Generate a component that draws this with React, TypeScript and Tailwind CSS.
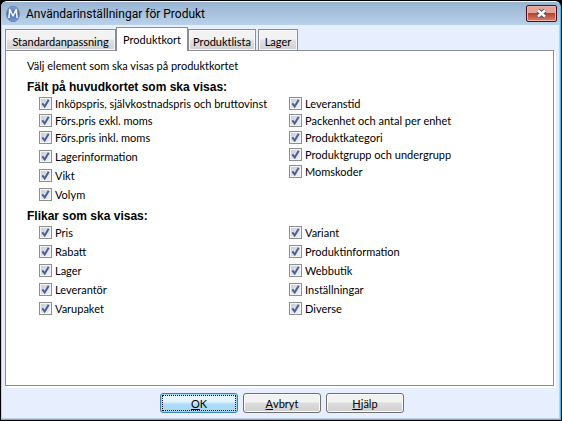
import { useState } from "react";

type Field = {
  id: string;
  label: string;
  spaced?: boolean;
};

const tabs = [
  { label: "Standardanpassning", size: "w-[111px]" },
  { label: "Produktkort", size: "w-[72px]" },
  { label: "Produktlista", size: "mr-[2px] w-[68px]" },
  { label: "Lager", size: "w-[40px]" },
];

const cardLeft: Field[] = [
  { id: "inkopspris", label: "Inköpspris, självkostnadspris och bruttovinst" },
  { id: "exkl", label: "Förs.pris exkl. moms" },
  { id: "inkl", label: "Förs.pris inkl. moms" },
  { id: "lagerinfo", label: "Lagerinformation", spaced: true },
  { id: "vikt", label: "Vikt", spaced: true },
  { id: "volym", label: "Volym", spaced: true },
];

const cardRight: Field[] = [
  { id: "leveranstid", label: "Leveranstid" },
  { id: "packenhet", label: "Packenhet och antal per enhet" },
  { id: "kategori", label: "Produktkategori" },
  { id: "grupp", label: "Produktgrupp och undergrupp" },
  { id: "momskoder", label: "Momskoder" },
];

const tabsLeft: Field[] = [
  { id: "pris", label: "Pris" },
  { id: "rabatt", label: "Rabatt", spaced: true },
  { id: "lager", label: "Lager", spaced: true },
  { id: "leverantor", label: "Leverantör", spaced: true },
  { id: "varupaket", label: "Varupaket", spaced: true },
];

const tabsRight: Field[] = [
  { id: "variant", label: "Variant" },
  { id: "produktinfo", label: "Produktinformation", spaced: true },
  { id: "webbutik", label: "Webbutik", spaced: true },
  { id: "installningar", label: "Inställningar", spaced: true },
  { id: "diverse", label: "Diverse", spaced: true },
];

function Logo() {
  return (
    <svg width="16" height="18" viewBox="0 0 16 18" aria-hidden="true">
      <defs>
        <linearGradient id="logo" x1="0" y1="0" x2="0" y2="1">
          <stop offset="0" stopColor="#8fa9d3" />
          <stop offset="0.45" stopColor="#3f68b4" />
          <stop offset="1" stopColor="#7d9ccb" />
        </linearGradient>
      </defs>
      <ellipse cx="8" cy="9" rx="6.5" ry="7.7" fill="url(#logo)" stroke="#7187ab" />
      <path
        d="M3.9 13L4.8 4.5L8 11L11.2 4.5L12.1 13"
        fill="none"
        stroke="#f4f8ff"
        strokeWidth="1.6"
        strokeLinejoin="round"
      />
    </svg>
  );
}

function CheckField({ field }: { field: Field }) {
  return (
    <li className={`flex h-[17px] items-center ${field.spaced ? "mt-[2px]" : ""}`}>
      <span className="relative flex size-[13px] shrink-0">
        <input
          id={field.id}
          type="checkbox"
          defaultChecked
          className="peer size-[13px] appearance-none border border-[#8e8f8f] bg-linear-to-br from-[#c6cbd3] to-[#f6f6f6] shadow-[inset_0_0_0_1px_#f4f4f4]"
        />
        <svg
          viewBox="0 0 13 13"
          className="pointer-events-none absolute inset-0 hidden size-[13px] peer-checked:block"
          aria-hidden="true"
        >
          <path d="M3.3 6.3L5.7 9.5L9.7 2.7" fill="none" stroke="#4a5f97" strokeWidth="2" />
        </svg>
      </span>
      <label htmlFor={field.id} className="pl-[3px] whitespace-nowrap">
        {field.label}
      </label>
    </li>
  );
}

function FieldColumns({ left, right }: { left: Field[]; right: Field[] }) {
  return (
    <div className="grid grid-cols-2 pr-[14px] pl-[33px]">
      {[left, right].map((fields, i) => (
        <ul key={i}>
          {fields.map((field) => (
            <CheckField key={field.id} field={field} />
          ))}
        </ul>
      ))}
    </div>
  );
}

function DialogButton({ label, primary }: { label: string; primary?: boolean }) {
  return (
    <button
      type="button"
      className={`h-5 w-[78px] rounded-[3px] border p-px ${
        primary
          ? "border-[#3c7fb1] bg-linear-to-b from-[#e5f4fc] from-40% to-[#a9dbf5] to-60% shadow-[inset_0_0_0_1px_#9bdcf5]"
          : "border-[#707070] bg-linear-to-b from-[#f2f2f2] from-45% via-[#dddddd] via-50% to-[#cfcfcf] shadow-[inset_0_0_0_1px_#fafafa]"
      }`}
    >
      <span
        className={`flex h-4 items-center justify-center border ${
          primary ? "border-dotted border-black" : "border-transparent"
        }`}
      >
        <span className="underline">{label[0]}</span>
        {label.slice(1)}
      </span>
    </button>
  );
}

export default function App() {
  const [active, setActive] = useState("Produktkort");

  return (
    <div className="flex min-h-screen flex-col bg-black font-[Lato,'Liberation_Sans',sans-serif] text-[11px] leading-[13px] text-black">
      <div className="m-px flex grow flex-col overflow-hidden rounded-t-[6px] border-t border-r border-b border-t-[#f4f8fc] border-r-[#35c5ee] border-b-[#35c5ee] bg-[#b9d1ea]">
        <header className="flex h-[23px] items-center bg-linear-to-b from-[#98b4d2] to-[#b9d1ea] pr-[3px] pl-1">
          <Logo />
          <h1 className="grow pl-[5px] font-[Roboto,sans-serif] text-[12px] leading-4">
            Användarinställningar för Produkt
          </h1>
          <button
            type="button"
            aria-label="Stäng"
            className="flex h-[17px] w-[31px] items-center justify-center rounded-[2px] border border-[#43141c] bg-linear-to-b from-[#e6a397] from-45% via-[#b9402b] via-50% to-[#d4826f] shadow-[inset_0_0_0_1px_#ecb5aa]"
          >
            <svg width="13" height="11" viewBox="0 0 13 11" aria-hidden="true">
              <path d="M3 2.5L10 8.5M10 2.5L3 8.5" stroke="#535666" strokeWidth="4.4" />
              <path d="M3 2.5L10 8.5M10 2.5L3 8.5" stroke="#ffffff" strokeWidth="2.4" />
            </svg>
          </button>
        </header>

        <main className="mx-px mb-px flex grow flex-col bg-[#e7eefd] pt-px pr-[5px] pl-[3px]">
          <div role="tablist" className="flex h-6 items-end">
            {tabs.map((tab) => {
              const selected = tab.label === active;
              return (
                <button
                  key={tab.label}
                  type="button"
                  role="tab"
                  aria-selected={selected}
                  onClick={() => setActive(tab.label)}
                  className={`flex justify-center whitespace-nowrap border-x border-t border-[#898c95] pt-[5px] ${tab.size} ${
                    selected
                      ? "z-10 -mb-px h-6 bg-white"
                      : "h-[21px] bg-linear-to-b from-[#f2f2f2] from-45% via-[#e2e2e2] via-50% to-[#cfcfcf] shadow-[inset_0_0_0_1px_#f8f8f8]"
                  }`}
                >
                  {tab.label}
                </button>
              );
            })}
          </div>

          <section
            role="tabpanel"
            className="flex grow flex-col border border-[#898c95] bg-white pt-[7px] pb-6 shadow-[2px_2px_0_#ffffff]"
          >
            <p className="pl-[21px] leading-4">Välj element som ska visas på produktkortet</p>
            <h2 className="pt-[6px] pl-[21px] font-['Liberation_Sans',Arial,sans-serif] text-[12px] leading-[15px] font-bold">
              Fält på huvudkortet som ska visas:
            </h2>
            <FieldColumns left={cardLeft} right={cardRight} />
            <h2 className="pt-[6px] pl-[21px] font-['Liberation_Sans',Arial,sans-serif] text-[12px] leading-[15px] font-bold">
              Flikar som ska visas:
            </h2>
            <FieldColumns left={tabsLeft} right={tabsRight} />
          </section>

          <footer className="flex justify-center gap-[5px] pt-[7px] pb-[5px] pl-[5px]">
            <DialogButton label="OK" primary />
            <DialogButton label="Avbryt" />
            <DialogButton label="Hjälp" />
          </footer>
        </main>
      </div>
    </div>
  );
}
